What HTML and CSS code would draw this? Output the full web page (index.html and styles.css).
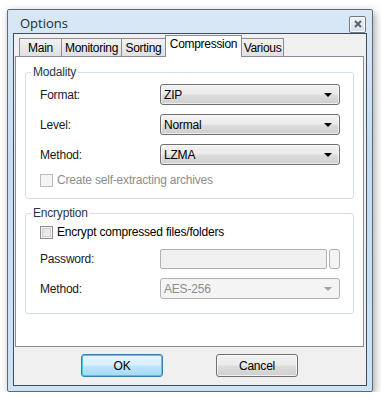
FILE: index.html
```html
<!DOCTYPE html>
<html lang="en">
<head>
    <meta charset="UTF-8" />
    <title>Options</title>
    <link rel="stylesheet" href="styles.css">
</head>
<body>
    <div class="window">
        <div class="titlebar">
            <span class="title">Options</span>
            <span class="close">
                <svg width="8" height="8" viewBox="0 0 8 8"><path d="M1 1L7 7M7 1L1 7" stroke="#5a6470" stroke-width="2"/></svg>
            </span>
        </div>
        <div class="client">
            <div class="tabs">
                <div class="tab">Main</div>
                <div class="tab">Monitoring</div>
                <div class="tab">Sorting</div>
                <div class="tab active">Compression</div>
                <div class="tab">Various</div>
            </div>
            <div class="panel">
                <fieldset class="group modality">
                    <legend>Modality</legend>
                    <div class="row">
                        <label>Format:</label>
                        <div class="combo"><span>ZIP</span><i class="arrow"></i></div>
                    </div>
                    <div class="row">
                        <label>Level:</label>
                        <div class="combo"><span>Normal</span><i class="arrow"></i></div>
                    </div>
                    <div class="row">
                        <label>Method:</label>
                        <div class="combo"><span>LZMA</span><i class="arrow"></i></div>
                    </div>
                    <div class="check disabled"><span class="box"></span>Create self-extracting archives</div>
                </fieldset>
                <fieldset class="group encryption">
                    <legend>Encryption</legend>
                    <div class="check"><span class="box"></span>Encrypt compressed files/folders</div>
                    <div class="row">
                        <label>Password:</label>
                        <div class="pass">
                            <div class="textbox"></div>
                            <div class="mini"></div>
                        </div>
                    </div>
                    <div class="row">
                        <label>Method:</label>
                        <div class="combo off"><span>AES-256</span><i class="arrow"></i></div>
                    </div>
                </fieldset>
            </div>
            <div class="buttons">
                <button class="btn default">OK</button>
                <button class="btn">Cancel</button>
            </div>
        </div>
    </div>
</body>
</html>
```
FILE: styles.css
```css
* {
    box-sizing: border-box;
}

body {
    margin: 0;
    background: #fff;
    font-family: 'Liberation Sans', Arial, sans-serif;
    font-size: 11px;
    color: #000;
}

.window {
    width: 366px;
    height: 383px;
    margin: 9px 0 0 7px;
    border: 1px solid #5b6878;
    border-radius: 2px;
    background: linear-gradient(#d8e8f7, #c6dcf2 40%, #cfe3f7);
    box-shadow: 2px 3px 8px rgba(0, 0, 0, 0.35);
    padding: 0 5px 5px;
    display: flex;
    flex-direction: column;
}

.titlebar {
    height: 23px;
    display: flex;
    align-items: center;
    justify-content: space-between;
    padding-left: 7px;
}

.title {
    font-family: 'Open Sans', 'Liberation Sans', sans-serif;
    font-size: 13px;
    color: #1e2a36;
    margin-top: 2px;
}

.close {
    width: 17px;
    height: 17px;
    margin-top: 5px;
    margin-right: 1px;
    border: 1px solid #6f7b88;
    border-radius: 2px;
    background: linear-gradient(#eef3f8, #d6e0ea);
    display: flex;
    align-items: center;
    justify-content: center;
    box-shadow: inset 0 0 0 1px #fafcfe;
}

.client {
    flex: 1;
    border: 1px solid #404c58;
    background: #f0f0f0;
    padding: 1px 2px 0 1px;
}

.tabs {
    display: flex;
    height: 21px;
    align-items: flex-end;
    padding-left: 4px;
    position: relative;
    z-index: 1;
}

.tab {
    height: 18px;
    padding-top: 2px;
    border: 1px solid #898c95;
    border-bottom: none;
    margin-right: -1px;
    background: linear-gradient(#f2f2f2, #e0e0e0);
    font-size: 12px;
    letter-spacing: -0.3px;
    text-align: center;
    color: #000;
    white-space: nowrap;
}

.tab:nth-child(1) { width: 43px; }
.tab:nth-child(2) { width: 61px; }
.tab:nth-child(3) { width: 45px; }
.tab:nth-child(5) { width: 43px; }

.tab.active {
    width: 77px;
    height: 22px;
    margin-bottom: -1px;
    padding-top: 1px;
    background: #fff;
    position: relative;
    z-index: 2;
}

.panel {
    height: 291px;
    border: 1px solid #898c95;
    background: #fff;
    padding: 8px 9px 0 9px;
}

.group {
    margin: 0;
    border: 1px solid #d5dfe5;
    border-radius: 3px;
    padding: 0 13px 0 14px;
}

.group legend {
    padding: 0 2px;
    margin-left: -9px;
    font-size: 12px;
    letter-spacing: -0.2px;
    color: #1e3950;
}

.modality {
    height: 134px;
    padding-top: 5px;
}

.encryption {
    height: 108px;
    margin-top: 7px;
    padding-top: 5px;
}

.row {
    display: flex;
    align-items: center;
    height: 21px;
    margin-bottom: 9px;
}

.row label {
    width: 120px;
    font-size: 12px;
    letter-spacing: -0.2px;
    color: #1a1a1a;
}

.combo {
    flex: 1;
    height: 21px;
    border: 1px solid #707070;
    border-radius: 3px;
    background: linear-gradient(#f2f2f2, #ebebeb 48%, #dddddd 52%, #cfcfcf);
    display: flex;
    align-items: center;
    justify-content: space-between;
    padding: 0 7px 0 3px;
    font-size: 12px;
    letter-spacing: -0.2px;
    box-shadow: inset 0 0 0 1px rgba(255, 255, 255, 0.6);
}

.arrow {
    width: 0;
    height: 0;
    border-left: 4px solid transparent;
    border-right: 4px solid transparent;
    border-top: 4px solid #000;
    margin-top: 1px;
}

.combo.off {
    background: #f4f4f4;
    border-color: #adb2b5;
    color: #8d8d8d;
    box-shadow: none;
}

.combo.off .arrow {
    border-top-color: #a0a0a0;
}

.pass {
    flex: 1;
    display: flex;
    gap: 2px;
    height: 20px;
}

.textbox {
    flex: 1;
    border: 1px solid #adb2b5;
    border-radius: 2px;
    background: #f0f0f0;
}

.mini {
    width: 11px;
    border: 1px solid #adb2b5;
    border-radius: 3px;
    background: #f4f4f4;
}

.check {
    display: flex;
    align-items: center;
    height: 14px;
    font-size: 12px;
    letter-spacing: -0.2px;
}

.check.disabled {
    color: #8d8d8d;
    margin-top: -1px;
}

.box {
    width: 13px;
    height: 13px;
    margin-right: 4px;
    border: 1px solid #8e8f8f;
    background: linear-gradient(135deg, #dcdcdc, #f6f6f6);
    box-shadow: inset 0 0 0 1px #f4f4f4, inset 0 0 0 2px #cfcfcf;
}

.check.disabled .box {
    border-color: #bcbcbc;
    background: #f4f4f4;
    box-shadow: none;
}

.encryption .check {
    margin-bottom: 9px;
}

.buttons {
    display: flex;
    justify-content: center;
    gap: 53px;
    padding-top: 7px;
}

.btn {
    width: 82px;
    height: 23px;
    border: 1px solid #707070;
    border-radius: 3px;
    background: linear-gradient(#f2f2f2, #ebebeb 48%, #dddddd 52%, #cfcfcf);
    font-family: 'Liberation Sans', Arial, sans-serif;
    font-size: 12px;
    letter-spacing: -0.2px;
    color: #000;
    box-shadow: inset 0 0 0 1px rgba(255, 255, 255, 0.7);
    padding: 0;
}

.btn.default {
    border-color: #3c7fb1;
    background: linear-gradient(#eaf6fd, #d9f0fc 48%, #bee6fd 52%, #a7d9f5);
    box-shadow: inset 0 0 0 1px #48c5f5;
}
```
